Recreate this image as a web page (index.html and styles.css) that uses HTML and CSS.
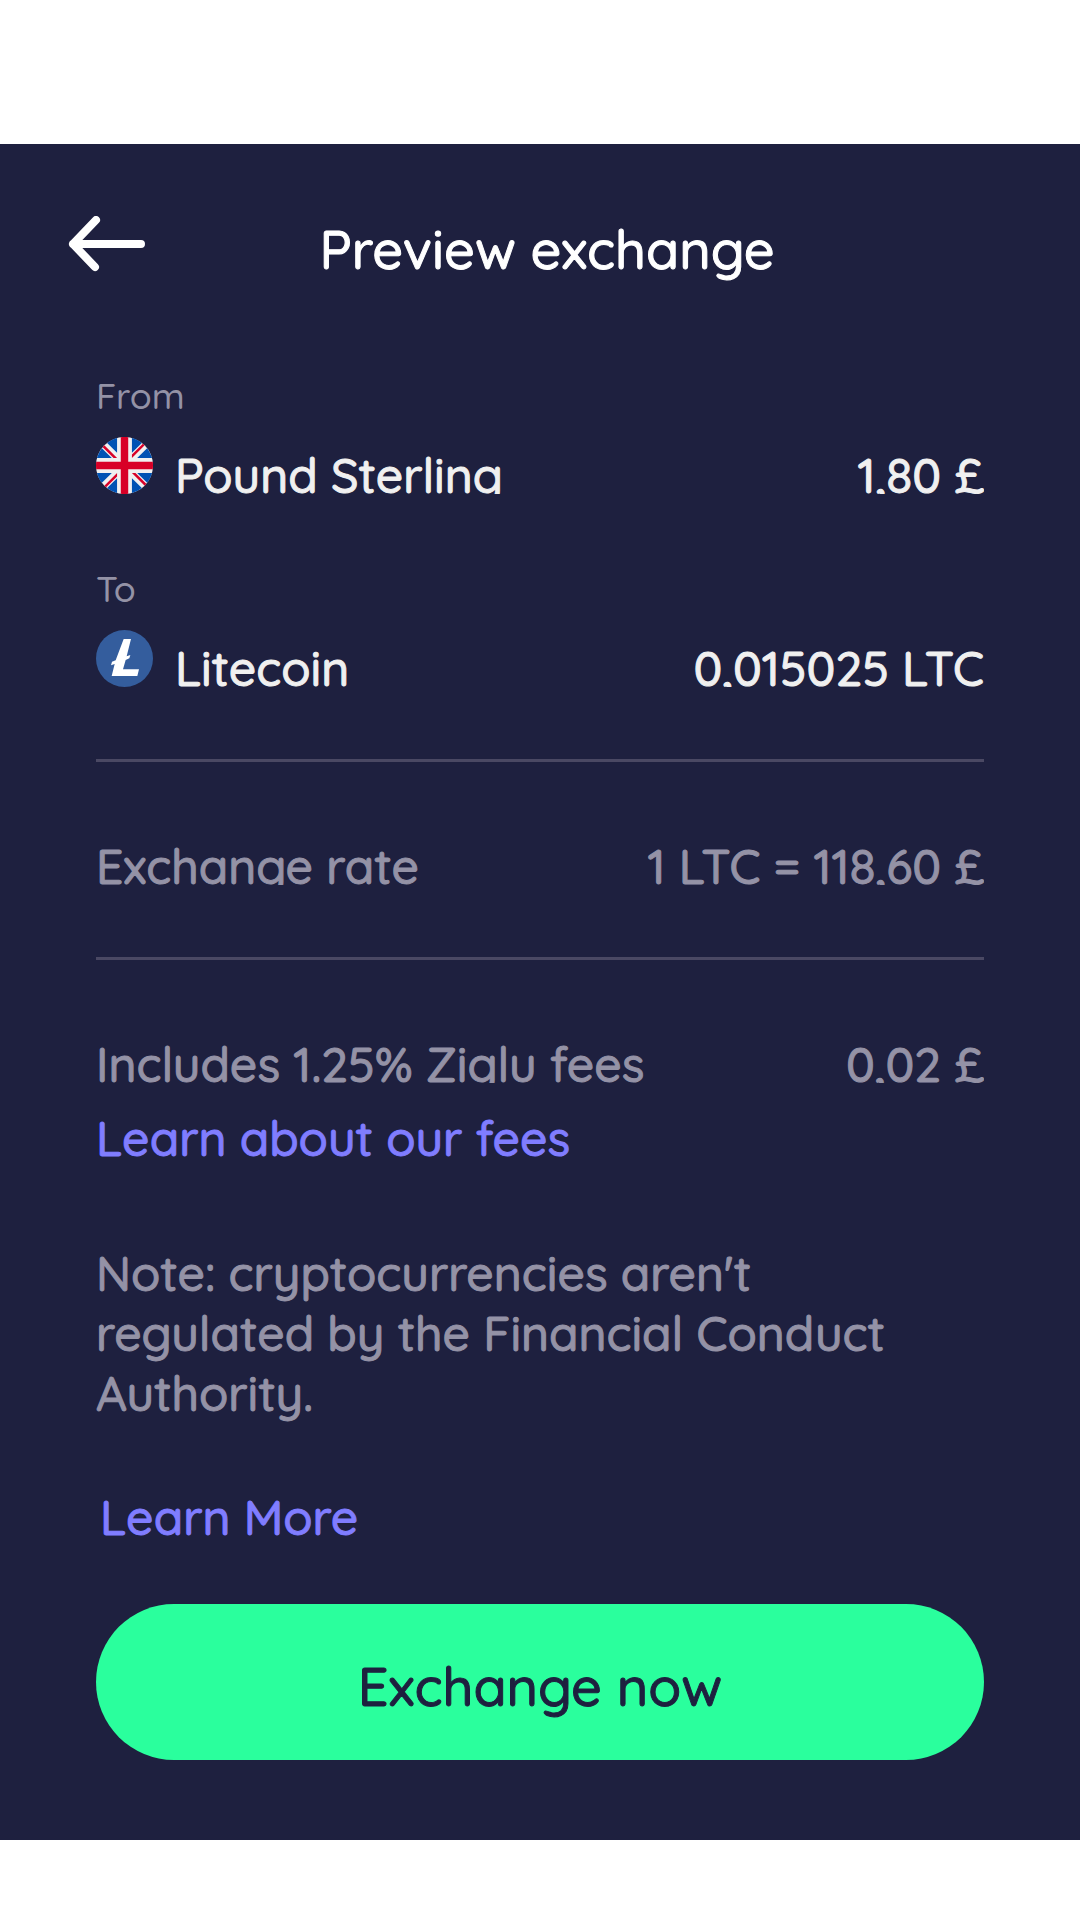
FILE: index.html
```
<!DOCTYPE html>
<html lang="en">
<head>
<meta charset="utf-8">
<meta name="viewport" content="width=device-width, initial-scale=1">
<title>Preview exchange</title>
<link rel="stylesheet" href="styles.css">
</head>
<body>
<main class="screen">
  <header class="header">
    <button class="back" type="button" aria-label="Back">
      <svg class="back-icon" viewBox="0 0 77 56" aria-hidden="true"><path d="M28 4 5 28l22 23M5 28h68"/></svg>
    </button>
    <h1 class="title">Preview exchange</h1>
  </header>

  <section class="content">
    <div class="party">
      <p class="label">From</p>
      <div class="row">
        <svg class="coin" viewBox="0 0 512 512" aria-hidden="true">
          <circle cx="256" cy="256" r="256" fill="#f0f0f0"/>
          <path fill="#0052b4" d="M52.92 100.142c-20.109 26.163-35.272 56.318-44.101 89.077h133.178zM503.181 189.219c-8.829-32.758-23.993-62.913-44.101-89.076l-89.075 89.076zM8.819 322.784c8.83 32.758 23.993 62.913 44.101 89.075l89.074-89.075zM411.858 52.921c-26.163-20.109-56.317-35.272-89.076-44.102v133.177zM100.142 459.079c26.163 20.109 56.318 35.272 89.076 44.102V370.005zM189.217 8.819c-32.758 8.83-62.913 23.993-89.075 44.101l89.075 89.075zM322.783 503.181c32.758-8.83 62.913-23.993 89.075-44.101l-89.075-89.075zM370.005 322.784l89.075 89.076c20.108-26.162 35.272-56.318 44.101-89.076z"/>
          <path fill="#d80027" d="M509.833 222.609H289.392V2.167C278.461.744 267.317 0 256 0c-11.319 0-22.461.744-33.391 2.167v220.442H2.167C.744 233.539 0 244.683 0 256c0 11.319.744 22.461 2.167 33.391h220.442v220.442C233.539 511.256 244.681 512 256 512c11.317 0 22.461-.743 33.391-2.167V289.392h220.442C511.256 278.461 512 267.319 512 256c0-11.317-.744-22.461-2.167-33.391z"/>
          <path fill="#d80027" d="M322.783 322.784L437.019 437.02c5.254-5.252 10.266-10.743 15.048-16.435l-97.802-97.802zM189.217 322.784L74.98 437.019c5.252 5.254 10.743 10.266 16.435 15.048l97.802-97.804zM189.217 189.219L74.981 74.98c-5.254 5.252-10.266 10.743-15.048 16.435l97.803 97.803zM322.783 189.219L437.02 74.981c-5.252-5.254-10.743-10.266-16.435-15.047l-97.802 97.803z"/>
        </svg>
        <span class="name">Pound Sterling</span>
        <span class="amount">1,80 £</span>
      </div>
    </div>

    <div class="party">
      <p class="label">To</p>
      <div class="row">
        <svg class="coin" viewBox="0 0 171 171" aria-hidden="true">
          <circle cx="85.500" cy="85.500" r="85.500" fill="#345d9d"/>
          <path fill="#fff" d="M83 27h22L92 79l11-4-3 10-11 5-8 28h48l-5 20H47l9-36-11 4 3-11 11-4z"/>
        </svg>
        <span class="name">Litecoin</span>
        <span class="amount">0,015025 LTC</span>
      </div>
    </div>

    <div class="detail">
      <div class="row">
        <span class="name">Exchange rate</span>
        <span class="amount">1 LTC = 118,60 £</span>
      </div>
    </div>

    <div class="detail">
      <div class="row">
        <span class="name">Includes 1.25% Ziglu fees</span>
        <span class="amount">0,02 £</span>
      </div>
    </div>
    <a class="link fees-link" href="#fees">Learn about our fees</a>

    <p class="note">Note: cryptocurrencies aren't regulated by the Financial Conduct Authority.</p>
    <a class="link more-link" href="#more">Learn More</a>

    <button class="submit" type="button">Exchange now</button>
  </section>
</main>
</body>
</html>
```
FILE: styles.css
```
* {
  box-sizing: border-box;
}

body {
  margin: 0;
  background: #fff;
  font-family: Quicksand, Lato, sans-serif;
  font-size: 48px;
  font-weight: 500;
  line-height: 60px;
  -webkit-text-stroke: 1px currentColor;
}

h1,
p {
  margin: 0;
}

button {
  border: 0;
  padding: 0;
  font: inherit;
  cursor: pointer;
}

.screen {
  margin: 144px 0 80px;
  padding-bottom: 80px;
  background: #1e203f;
}

.header {
  display: grid;
  grid-template-columns: 80px 1fr 66px;
  align-items: start;
  padding: 72px 68px 0;
}

.back {
  display: flex;
  background: none;
}

.back-icon {
  width: 77px;
  height: 56px;
  fill: none;
  stroke: #fff;
  stroke-width: 8;
  stroke-linecap: round;
  stroke-linejoin: round;
}

.title {
  color: #fff;
  font-size: 54px;
  font-weight: inherit;
  line-height: 66px;
  text-align: center;
}

.content {
  display: flex;
  flex-direction: column;
  padding: 91px 96px 0;
}

.party {
  margin-bottom: 72px;
  color: #f0f0f0;
}

.label {
  margin-bottom: 18px;
  color: #9492a6;
  font-size: 36px;
  line-height: 46px;
  -webkit-text-stroke: 0;
}

/* Rows are as tall as the coin icon and cut off the descenders. */
.row {
  display: flex;
  height: 57px;
  overflow: hidden;
  line-height: 77px;
  white-space: nowrap;
}

.coin {
  flex: none;
  width: 57px;
  height: 57px;
  margin-right: 22px;
}

.amount {
  margin-left: auto;
}

.detail {
  padding: 66px 0 72px;
  border-top: 3px solid #4a4863;
  color: #9492a6;
}

.detail + .link {
  margin-top: -47px;
}

.link {
  align-self: flex-start;
  color: #807dff;
  text-decoration: none;
}

.note {
  margin: 75px 64px 64px 0;
  color: #9492a6;
}

.more-link {
  margin-left: 4px;
}

.submit {
  height: 156px;
  margin-top: 57px;
  padding-top: 8px;
  border-radius: 78px;
  background: #2aff9d;
  color: #1e203f;
  font-size: 54px;
}
```
